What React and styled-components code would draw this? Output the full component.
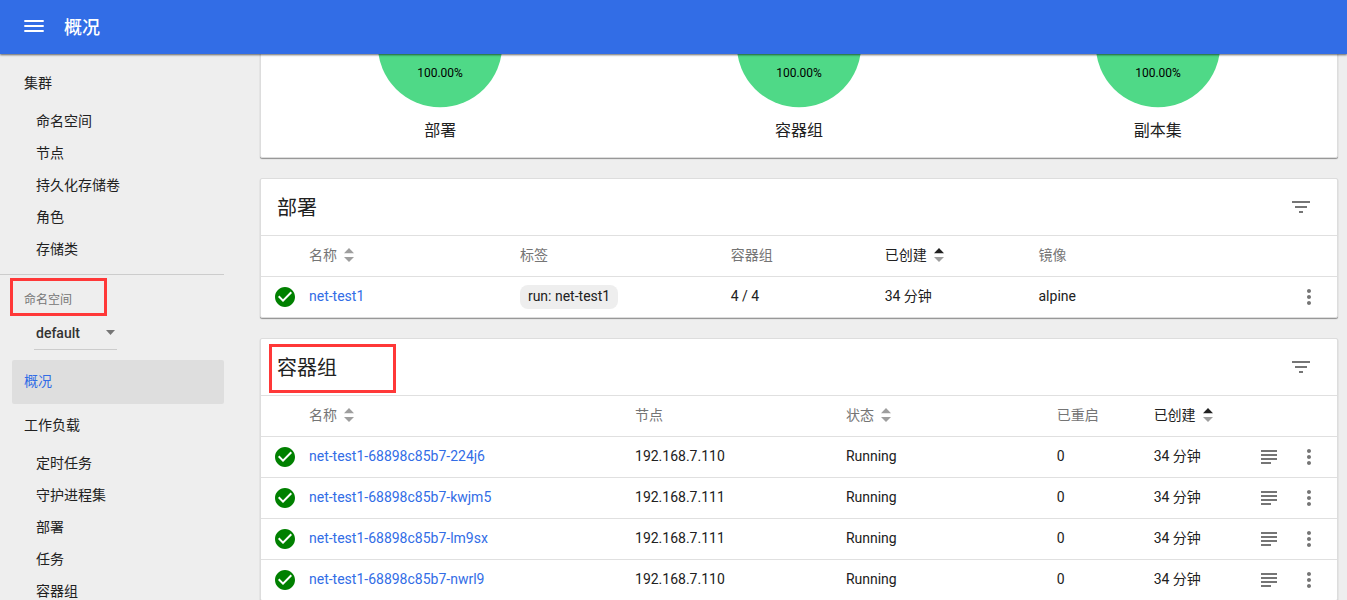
import React, { useLayoutEffect, useRef } from "react";
import styled, { createGlobalStyle, css } from "styled-components";

const GlobalStyle = createGlobalStyle`
  *, *::before, *::after { box-sizing: border-box; }
  body {
    margin: 0;
    background: #eee;
    color: #212121;
    font-family: Roboto, "Noto Sans CJK SC", sans-serif;
    font-size: 14px;
    line-height: 20px;
  }
  a { color: inherit; text-decoration: none; }
  button { padding: 0; border: 0; background: none; color: inherit; font: inherit; cursor: pointer; }
  svg { display: block; flex: none; }
`;

const Shell = styled.div`
  display: flex;
  flex-direction: column;
  height: 100vh;
  overflow: hidden;
`;

const TopBar = styled.header`
  display: flex;
  align-items: center;
  flex: none;
  gap: 18px;
  height: 54px;
  padding: 0 22px;
  background: #326de6;
  color: #fff;
  box-shadow: 0 1px 2px rgba(0, 0, 0, 0.6);
  z-index: 2;
`;

const PageTitle = styled.h1`
  margin: 0;
  padding-top: 2px;
  font-size: 18px;
  font-weight: 500;
  line-height: 24px;
`;

const Body = styled.div`
  display: flex;
  flex: 1;
  min-height: 0;
`;

const SideNav = styled.nav`
  flex: none;
  width: 224px;
  padding-top: 8px;
  overflow: hidden;
`;

const NavHeading = styled.a`
  display: flex;
  align-items: center;
  height: 44px;
  margin-left: 12px;
  padding: 0 12px 2px;
  border-radius: 2px;
  ${(p) =>
    p.$active &&
    css`
      background: #dedede;
      color: #326de6;
    `}
`;

const NavList = styled.ul`
  margin: 0;
  padding: 0 0 0 36px;
  list-style: none;
`;

const NavItem = styled.li`
  display: flex;
  align-items: center;
  height: 32px;
  padding-bottom: 2px;
`;

const NamespacePicker = styled.div`
  margin-top: 8px;
  padding: 16px 0 10px 24px;
  border-top: 1px solid #ccc;
`;

const NamespaceLabel = styled.label`
  position: relative;
  display: block;
  width: 83px;
  color: #757575;
  font-size: 12px;
  line-height: 18px;
`;

const SelectBox = styled.div`
  position: relative;
  width: 83px;
  margin: 8px 0 0 10px;
  svg {
    position: absolute;
    right: 2px;
    top: 13px;
    pointer-events: none;
  }
`;

const Select = styled.select`
  display: block;
  width: 100%;
  height: 33px;
  padding: 0 2px;
  border: 0;
  border-bottom: 1px solid #ccc;
  border-radius: 0;
  background: none;
  appearance: none;
  color: #333;
  font: inherit;
  font-weight: 500;
`;

const Highlight = styled.span`
  position: absolute;
  inset: ${(p) => p.$inset};
  width: ${(p) => p.$width};
  border: 3px solid #ff3838;
  pointer-events: none;
`;

const Main = styled.main`
  display: flex;
  flex: 1;
  flex-direction: column;
  gap: 20px;
  min-width: 0;
  padding: 0 9px 20px 36px;
  overflow-y: auto;
  scrollbar-width: none;
`;

const Card = styled.section`
  flex: none;
  border: 1px solid #ddd;
  border-radius: 2px;
  background: #fff;
  box-shadow: 0 1px 1px rgba(0, 0, 0, 0.4);
`;

const Charts = styled.div`
  display: grid;
  grid-template-columns: repeat(3, 1fr);
  padding: 16px 0 14px;
`;

const Chart = styled.figure`
  display: flex;
  flex-direction: column;
  align-items: center;
  gap: 11px;
  margin: 0;
  font-size: 16px;
  line-height: 24px;
`;

const CardHeader = styled.header`
  position: relative;
  display: flex;
  align-items: center;
  justify-content: space-between;
  height: 57px;
  padding: 0 24px 0 16px;
  border-bottom: 1px solid #e0e0e0;
  color: #757575;
`;

const CardTitle = styled.h2`
  margin: 0;
  padding-top: 2px;
  color: #212121;
  font-size: 20px;
  font-weight: 400;
  line-height: 28px;
`;

const Table = styled.table`
  width: 100%;
  table-layout: fixed;
  border-collapse: separate;
  border-spacing: 0;
  text-align: left;
  th, td {
    height: 41px;
    padding: 0 0 2px;
    border-bottom: 1px solid #e0e0e0;
    font-weight: 400;
    white-space: nowrap;
  }
  tbody tr:last-child td {
    height: 40px;
    border-bottom: 0;
  }
`;

const Col = styled.col`
  width: ${(p) => p.$w};
`;

const ColumnHead = styled.th`
  color: ${(p) => (p.$sorted ? "#212121" : "#757575")};
`;

const SortButton = styled.button`
  display: flex;
  align-items: center;
  gap: 7px;
`;

const IconCell = styled.td`
  && { padding: 0; }
  color: #757575;
  svg { margin: 0 auto; }
`;

const IconButton = styled.button`
  display: block;
  margin: 0 auto;
`;

const ResourceLink = styled.a`
  color: #326de6;
`;

const Chip = styled.span`
  display: block;
  width: fit-content;
  margin-bottom: -2px;
  padding: 1px 8px 3px;
  border-radius: 8px;
  background: #eee;
`;

const MenuIcon = () => (
  <svg width="24" height="24" fill="currentColor">
    <path d="M2.3 5h19.4v2H2.3zM2.3 10h19.4v2H2.3zM2.3 15h19.4v2H2.3z" />
  </svg>
);
const FilterIcon = () => (
  <svg width="24" height="24" fill="currentColor">
    <path d="M10 18h4v-2h-4v2zM3 6v2h18V6H3zm3 7h12v-2H6v2z" />
  </svg>
);
const MoreIcon = () => (
  <svg width="24" height="24" fill="currentColor">
    <path d="M12 8c1.1 0 2-.9 2-2s-.9-2-2-2-2 .9-2 2 .9 2 2 2zm0 2c-1.1 0-2 .9-2 2s.9 2 2 2 2-.9 2-2-.9-2-2-2zm0 6c-1.1 0-2 .9-2 2s.9 2 2 2 2-.9 2-2-.9-2-2-2z" />
  </svg>
);
const LogsIcon = () => (
  <svg width="24" height="24" fill="currentColor">
    <path d="M14 17H4v2h10v-2zm6-8H4v2h16V9zM4 15h16v-2H4v2zM4 5v2h16V5H4z" />
  </svg>
);
const OkIcon = () => (
  <svg width="24" height="24" fill="green" role="img" aria-label="正常">
    <path d="M12 2C6.48 2 2 6.48 2 12s4.48 10 10 10 10-4.48 10-10S17.52 2 12 2zm-2 15l-5-5 1.41-1.41L10 14.17l7.59-7.59L19 8l-9 9z" />
  </svg>
);
const SortIcon = ({ sorted }) => (
  <svg width="10" height="14">
    <path d="M0 5.3L5 0l5 5.3z" fill={sorted ? "#212121" : "#9e9e9e"} />
    <path d="M0 9h10l-5 5z" fill="#9e9e9e" />
  </svg>
);

const Pie = ({ label }) => (
  <Chart>
    <svg width="126" height="126">
      <circle cx="63" cy="63" r="62.2" fill="#4fd987" />
      <text x="63" y="95" textAnchor="middle" fontSize="12" fill="#000">
        100.00%
      </text>
    </svg>
    <figcaption>{label}</figcaption>
  </Chart>
);

const clusterItems = ["命名空间", "节点", "持久化存储卷", "角色", "存储类"];
const workloadItems = ["定时任务", "守护进程集", "部署", "任务", "容器组"];

const deploymentColumns = [
  { label: "名称", sortable: true, width: "19.6%" },
  { label: "标签", width: "19.6%" },
  { label: "容器组", width: "14.3%" },
  { label: "已创建", sortable: true, sorted: true, width: "14.3%" },
  { label: "镜像", width: "auto" },
];
const deployments = [
  { name: "net-test1", cells: [<Chip key="run">run: net-test1</Chip>, "4 / 4", "34 分钟", "alpine"] },
];

const podColumns = [
  { label: "名称", sortable: true, width: "30.3%" },
  { label: "节点", width: "19.6%" },
  { label: "状态", sortable: true, width: "19.6%" },
  { label: "已重启", width: "9%" },
  { label: "已创建", sortable: true, sorted: true, width: "auto" },
];
const pods = [
  ["224j6", "192.168.7.110"],
  ["kwjm5", "192.168.7.111"],
  ["lm9sx", "192.168.7.111"],
  ["nwrl9", "192.168.7.110"],
].map(([id, node]) => ({
  name: `net-test1-68898c85b7-${id}`,
  cells: [node, "Running", "0", "34 分钟"],
}));

function ResourceCard({ title, columns, rows, logs, highlighted }) {
  return (
    <Card>
      <CardHeader>
        <CardTitle>{title}</CardTitle>
        <button aria-label="筛选">
          <FilterIcon />
        </button>
        {highlighted && <Highlight $inset="5px auto 2px 8px" $width="127px" />}
      </CardHeader>
      <Table>
        <colgroup>
          <Col $w="48px" />
          {columns.map((c) => (
            <Col key={c.label} $w={c.width} />
          ))}
          {logs && <Col $w="24px" />}
          <Col $w="56px" />
        </colgroup>
        <thead>
          <tr>
            <th />
            {columns.map((c) => (
              <ColumnHead key={c.label} $sorted={c.sorted} scope="col">
                {c.sortable ? (
                  <SortButton>
                    {c.label}
                    <SortIcon sorted={c.sorted} />
                  </SortButton>
                ) : (
                  c.label
                )}
              </ColumnHead>
            ))}
            {logs && <th />}
            <th />
          </tr>
        </thead>
        <tbody>
          {rows.map((r) => (
            <tr key={r.name}>
              <IconCell>
                <OkIcon />
              </IconCell>
              <td>
                <ResourceLink href="#">{r.name}</ResourceLink>
              </td>
              {r.cells.map((cell, i) => (
                <td key={i}>{cell}</td>
              ))}
              {logs && (
                <IconCell>
                  <IconButton aria-label="日志">
                    <LogsIcon />
                  </IconButton>
                </IconCell>
              )}
              <IconCell>
                <IconButton aria-label="操作">
                  <MoreIcon />
                </IconButton>
              </IconCell>
            </tr>
          ))}
        </tbody>
      </Table>
    </Card>
  );
}

// Where the overview opens: past the upper part of the status charts.
const INITIAL_SCROLL = 89;

export default function App() {
  const mainRef = useRef(null);
  useLayoutEffect(() => {
    mainRef.current.scrollTop = INITIAL_SCROLL;
  }, []);

  return (
    <Shell>
      <GlobalStyle />
      <TopBar>
        <button aria-label="菜单">
          <MenuIcon />
        </button>
        <PageTitle>概况</PageTitle>
      </TopBar>
      <Body>
        <SideNav>
          <NavHeading href="#">集群</NavHeading>
          <NavList>
            {clusterItems.map((t) => (
              <NavItem key={t}>
                <a href="#">{t}</a>
              </NavItem>
            ))}
          </NavList>
          <NamespacePicker>
            <NamespaceLabel htmlFor="namespace">
              命名空间
              <Highlight $inset="-13px 0 -7px -14px" $width="auto" />
            </NamespaceLabel>
            <SelectBox>
              <Select id="namespace" defaultValue="default">
                <option>default</option>
              </Select>
              <svg width="9" height="5">
                <path d="M0 0h9L4.5 5z" fill="#757575" />
              </svg>
            </SelectBox>
          </NamespacePicker>
          <NavHeading href="#" $active>
            概况
          </NavHeading>
          <NavHeading href="#">工作负载</NavHeading>
          <NavList>
            {workloadItems.map((t) => (
              <NavItem key={t}>
                <a href="#">{t}</a>
              </NavItem>
            ))}
          </NavList>
        </SideNav>
        <Main ref={mainRef}>
          <Card>
            <Charts>
              <Pie label="部署" />
              <Pie label="容器组" />
              <Pie label="副本集" />
            </Charts>
          </Card>
          <ResourceCard title="部署" columns={deploymentColumns} rows={deployments} />
          <ResourceCard title="容器组" columns={podColumns} rows={pods} logs highlighted />
        </Main>
      </Body>
    </Shell>
  );
}
